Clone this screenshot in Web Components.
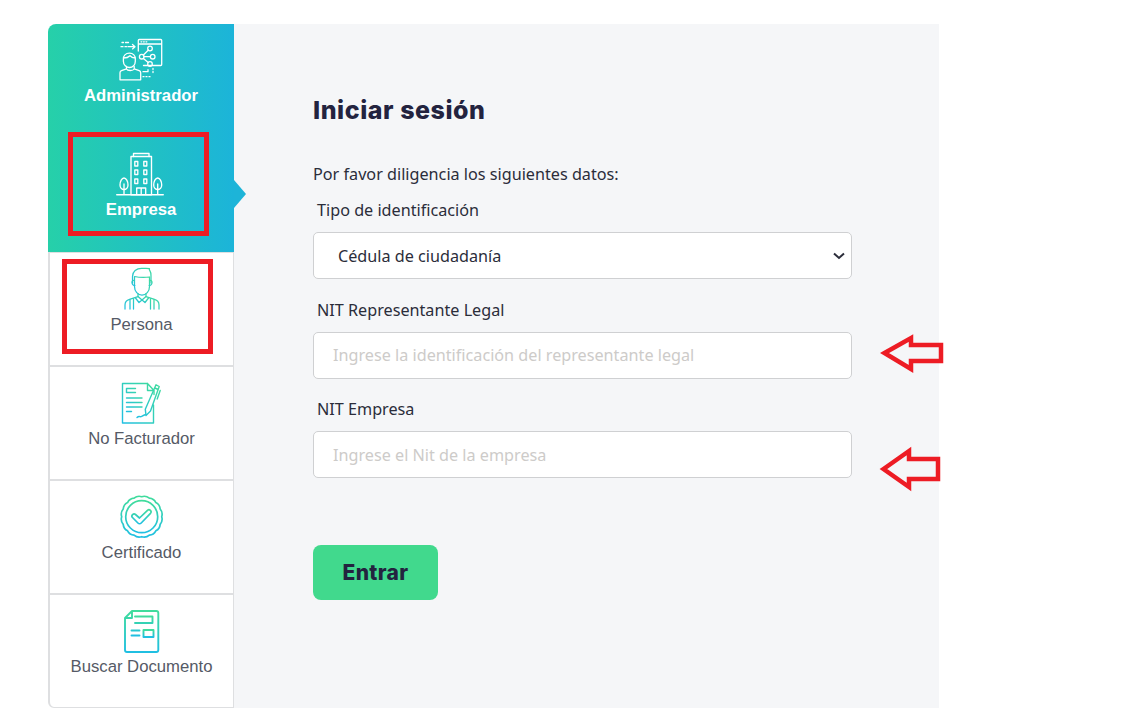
<!DOCTYPE html>
<html lang="es"><head><meta charset="utf-8"><title>Iniciar sesión</title>
<style>
html,body{margin:0;padding:0;background:#fff}
</style></head>
<body>
<login-page>
  <side-nav slot="nav">
    <nav-item label="Administrador" icon="admin" active></nav-item>
    <nav-item label="Empresa" icon="building" active pointer></nav-item>
    <nav-item label="Persona" icon="person"></nav-item>
    <nav-item label="No Facturador" icon="invoice"></nav-item>
    <nav-item label="Certificado" icon="cert"></nav-item>
    <nav-item label="Buscar Documento" icon="doc" last></nav-item>
  </side-nav>
  <login-form slot="main"></login-form>
</login-page>
<script>
const scallop=(cx,cy,r,n,a)=>{let d='';const st=2*Math.PI/n;for(let i=0;i<n;i++){const t=i*st,x=cx+r*Math.cos(t),y=cy+r*Math.sin(t),t2=t+st,x2=cx+r*Math.cos(t2),y2=cy+r*Math.sin(t2),m=t+st/2,qx=cx+(r+a)*Math.cos(m),qy=cy+(r+a)*Math.sin(m);d+=(i?'':`M${x.toFixed(2)} ${y.toFixed(2)}`)+`Q${qx.toFixed(2)} ${qy.toFixed(2)} ${x2.toFixed(2)} ${y2.toFixed(2)}`}return d+'Z'};
const ICONS={
admin:`<path d="M28.300 15V4.500c0-.6.400-1 1-1h21.400c.6 0 1 .4 1 1v24c0 .6-.4 1-1 1H33.500M28.300 8H51.700M31 5.800h.8M33.500 5.800h.8M36 5.800h.8"/><circle cx="31.700" cy="20.700" r="2.300"/><circle cx="40" cy="12.500" r="2.300"/><circle cx="42.700" cy="20.700" r="2.300"/><circle cx="40" cy="28" r="2.300"/><path d="M33.400 19l5-5M34 20.700h6.400M33.400 22.400l4.800 4"/><path d="M13.400 23.500c-.5-4 2.500-6.300 6-6.300s6.400 2.300 5.900 6.300M13.400 22c2.500 0 5-.6 6.600-2.300 1 1.400 3 2.300 5.300 2.300v3.500c0 3.300-2.600 6-5.800 6s-6.100-2.700-6.100-6z"/><path d="M16.500 30.500v2.300l-5 1.800c-1 .4-1.500 1.200-1.500 2.200v7h20.700v-7c0-1-.5-1.800-1.500-2.200l-5-1.800v-2.300M16.500 33c1 2 6.500 2 7.700 0"/><path d="M11 10.700h2M15 10.700h1.500M18 10.700h6.500M22.500 8.500l2.500 2.200-2.500 2.200M12 6.500h1.500M15.500 6.500h3"/><path d="M33 35.700h5v-2M43 32.500v1M43 35.500v1M33 40.700h1M36 40.700h1M39 40.700h1"/>`,
building:`<rect x="21" y="6.500" width="20.500" height="38.200"/><path d="M23.500 6.500V3.500h15.500v3M26.700 44.700V38h9v6.700M31.200 38v6.700M6.700 44.700H53.300M14 44.700V34M47.700 44.700V34"/><path d="M14 28c2.200 0 4 3.500 4 7 0 2.500-1.800 4.500-4 4.500S10 37.500 10 35c0-3.500 1.800-7 4-7zM47.700 28c2.200 0 4 3.500 4 7 0 2.500-1.800 4.500-4 4.500s-4-2-4-4.500c0-3.500 1.800-7 4-7z"/><rect x="24.800" y="11.500" width="3" height="4.500"/><rect x="33.800" y="11.500" width="3" height="4.500"/><rect x="24.800" y="20" width="3" height="4.500"/><rect x="33.800" y="20" width="3" height="4.500"/><rect x="24.800" y="29" width="3" height="4.500"/><rect x="33.800" y="29" width="3" height="4.500"/>`,
person:`<path d="M21.500 19v-6.500c0-5 4-8.200 9-8.200 3 0 5.500.2 8 .2-.6 1-.3 1.500.5 2.500 1 1.300 1 3 1 5V19"/><path d="M23.500 12.500c5 1 10.500 1 15 .5v9.500c0 5-3.400 8.500-7.500 8.500s-7.500-3.500-7.500-8.500z"/><path d="M23.500 16.500c-2-.4-2.500.8-2.500 2 0 1.500 1 3.200 2.800 3M38.500 16.500c2-.4 2.500.8 2.500 2 0 1.500-1 3.200-2.800 3"/><path d="M27 29.500v3.200l-8.500 2.600c-2.800.8-4.500 3-4.500 5.700v4M35 29.500v3.200l8.500 2.600c2.800.8 4.500 3 4.500 5.700v4"/><path d="M27 32.500l4 3.500-3 2.500-3.500-4.500M35 32.500l-4 3.500 3 2.500 3.500-4.500"/><path d="M19 35.500V45M22.500 34.700V45M39.500 34.700V45M43 35.500V45"/>`,
invoice:`<path d="M36.500 5.500H11.500V45h31V27M36.500 5.500v7h6.500v4M36.500 5.500l6.500 7"/><path d="M15.500 10.500h9M15.500 10.500v4h9M15.500 20h15.500M15.500 24.500h15.500M15.500 29h15.500M15.500 33.500h5"/><path d="M45 6.800l3.200 1.700-8.700 24.500-4.500 4.500-.7-6.200zM43.800 10l3.500 1.500M49.200 12.500l-3 8.500M26 39.500c2-2 3-.5 4-.8 1.500-.5 2-1.500 4-2"/>`,
cert:`<path d="M"/><circle cx="30.700" cy="24.700" r="16"/><path d="M21.500 25.500c-1.800-1.800 1-4.700 3-3l4 3.500 8-7.700c2-1.800 4.700 1 3 3l-9.300 9.700c-1 1-2.300 1-3.300 0z"/>`,
doc:`<path d="M21 5h24.300c1.100 0 2 .9 2 2v37c0 1.100-.9 2-2 2H16c-1.100 0-2-.9-2-2V12zM21 5v7h-7"/><path d="M24 10.500h17.500v6.500H24M20.500 24.500h8M20.500 29.500h8"/><rect x="32.500" y="24" width="10" height="7"/><path d="M20.500 37.500h17M41 37.500h1.500"/>`
};
const GRAD={person:[1,0,0,1],invoice:[1,0,0,1],cert:[0,0,0,1],doc:[0,0,0,1]};
const SW={admin:1.3,building:1.35,person:1.25,invoice:1.4,cert:1.7,doc:1.9};

customElements.define('nav-item',class extends HTMLElement{
  connectedCallback(){
    const r=this.attachShadow({mode:'open'});
    const ic=this.getAttribute('icon');
    const active=this.hasAttribute('active');
    const g=GRAD[ic]||[0,0,0,1];
    let body=ICONS[ic];
    if(ic==='cert') body=body.replace('<path d="M"/>',`<path d="${scallop(30.7,24.7,20,16,1.8)}"/>`);
    const stroke=active?'#fff':`url(#g-${ic})`;
    r.innerHTML=`<style>
      :host{display:flex;flex-direction:column;align-items:center;box-sizing:border-box;height:114px;position:relative;font:${active?'700':'400'} 16.700px/18px "Liberation Sans",Arial,sans-serif;color:${active?'#fff':'#555a66'};
        ${active?'':'background:#fff;border:solid #dedfe1;border-width:1px 1px 1px 2px;'}}
      :host([last]){border-bottom-left-radius:6px}
      svg.i{display:block;width:60px;height:50px;flex:none;margin-top:${active?12:11}px}
      span{display:block;margin-top:${active?1:2}px;white-space:nowrap}
      .tip{position:absolute;left:100%;top:42px;width:0;height:0;border-style:solid;border-width:14px 0 14px 12px;border-color:transparent transparent transparent #1db4d8}
    </style>
    <svg class="i" viewBox="1 0 60 50" fill="none" stroke="${stroke}" stroke-width="${SW[ic]}" stroke-linecap="round" stroke-linejoin="round" aria-hidden="true">
      <defs><linearGradient id="g-${ic}" gradientUnits="objectBoundingBox" x1="${g[0]}" y1="${g[1]}" x2="${g[2]}" y2="${g[3]}"><stop offset="0" stop-color="#40dc9c"/><stop offset="1" stop-color="#20bfe2"/></linearGradient></defs>
      ${body}
    </svg>
    <span>${this.getAttribute('label')}</span>
    ${this.hasAttribute('pointer')?'<i class="tip"></i>':''}`;
  }
});

customElements.define('side-nav',class extends HTMLElement{
  connectedCallback(){
    this.attachShadow({mode:'open'}).innerHTML=`<style>
      :host{display:block;width:186px;flex:none;position:relative;z-index:1}
      .grad{position:absolute;left:0;top:0;right:0;height:228px;background:linear-gradient(90deg,#26d0a9,#1cb4d9);border-top-left-radius:8px}
      .list{position:relative;display:flex;flex-direction:column}
    </style><div class="grad"></div><div class="list"><slot></slot></div>`;
  }
});

customElements.define('form-field',class extends HTMLElement{
  connectedCallback(){
    const r=this.attachShadow({mode:'open'});
    r.innerHTML=`<style>
      :host{display:block}
      label{display:block;padding-left:4px;font:inherit;line-height:24px;margin-bottom:10px;color:#2b2d3a}
      .ctl{position:relative;display:block}
      ::slotted(*){display:block}
    </style><label>${this.getAttribute('label')}</label><div class="ctl"><slot></slot></div>`;
  }
});

customElements.define('text-box',class extends HTMLElement{
  connectedCallback(){
    const r=this.attachShadow({mode:'open'});
    r.innerHTML=`<style>
      :host{display:block}
      input{display:block;box-sizing:border-box;width:100%;height:47px;padding:0 19px;border:1px solid #cfd0d2;border-radius:5px;background:#fff;font:inherit;color:#333;outline:none}
      input::placeholder{color:#cdcbc9;opacity:1}
    </style><input type="text" placeholder="${this.getAttribute('placeholder')}">`;
  }
});

customElements.define('select-box',class extends HTMLElement{
  connectedCallback(){
    const r=this.attachShadow({mode:'open'});
    r.innerHTML=`<style>
      :host{display:block;position:relative}
      select{display:block;box-sizing:border-box;width:100%;height:47px;padding:0 24px;border:1px solid #cfd0d2;border-radius:5px;background:#fff;font:inherit;color:#2b2d3a;appearance:none;-webkit-appearance:none;outline:none}
      svg{position:absolute;right:7px;top:20px;width:12px;height:8px;pointer-events:none}
    </style><select><option>${this.getAttribute('value')}</option></select>
    <svg viewBox="0 0 12 8" fill="none" stroke="#2b2d3a" stroke-width="2"><path d="M1 1.500l5 4.500 5-4.500"/></svg>`;
  }
});

customElements.define('login-form',class extends HTMLElement{
  connectedCallback(){
    const r=this.attachShadow({mode:'open'});
    r.innerHTML=`<style>
      :host{display:block;flex:1;background:#f5f6f8;height:684px;box-sizing:border-box;padding:70px 87px 0 79px;font:400 16.200px/24px "Noto Sans","Open Sans",sans-serif;color:#2b2d3a}
      h1{margin:0;font:800 25px/32px Inter,"Liberation Sans",sans-serif;letter-spacing:.55px;color:#23233f}
      p{margin:36px 0 0;line-height:24px}
      .fields{display:flex;flex-direction:column}
      form-field{margin-top:12px}
      form-field + form-field{margin-top:18.500px}
      button{display:block;margin-top:67px;width:125px;height:55px;border:0;border-radius:8px;background:#41d98d;font:800 21px/1 Inter,"Liberation Sans",sans-serif;letter-spacing:.4px;color:#23233f}
    </style>
    <h1>Iniciar sesión</h1>
    <p>Por favor diligencia los siguientes datos:</p>
    <div class="fields">
      <form-field label="Tipo de identificación"><select-box value="Cédula de ciudadanía"></select-box></form-field>
      <form-field label="NIT Representante Legal"><text-box placeholder="Ingrese la identificación del representante legal"></text-box></form-field>
      <form-field label="NIT Empresa"><text-box placeholder="Ingrese el Nit de la empresa"></text-box></form-field>
    </div>
    <button type="button">Entrar</button>`;
  }
});

customElements.define('red-box',class extends HTMLElement{
  connectedCallback(){
    this.attachShadow({mode:'open'}).innerHTML=`<style>:host{position:absolute;box-sizing:border-box;border:5px solid #ed1c24;z-index:3;pointer-events:none}</style>`;
  }
});
customElements.define('red-arrow',class extends HTMLElement{
  connectedCallback(){
    this.attachShadow({mode:'open'}).innerHTML=`<style>:host{position:absolute;left:0;top:0;width:1122px;height:724px;z-index:3;pointer-events:none}svg{display:block;width:100%;height:100%}</style>
    <svg viewBox="0 0 1122 724" fill="none" stroke="#ed1c24" stroke-width="4.500" stroke-linejoin="miter">
      <path d="M884.500 353L911 338V345H941V361H911V369Z"/>
      <path d="M883.500 469L909 451V459H938V479H909V487Z"/>
    </svg>`;
  }
});

customElements.define('login-page',class extends HTMLElement{
  connectedCallback(){
    this.attachShadow({mode:'open'}).innerHTML=`<style>
      :host{display:block;position:relative;width:1122px;height:724px;overflow:hidden}
      .wrap{display:flex;width:891px;margin-left:48px;padding-top:24px}
      red-box.a{left:68px;top:132px;width:141px;height:104px}
      red-box.b{left:62px;top:259px;width:151px;height:95px}
    </style>
    <div class="wrap"><slot name="nav"></slot><slot name="main"></slot></div>
    <red-box class="a"></red-box><red-box class="b"></red-box><red-arrow></red-arrow>`;
  }
});
</script>
</body></html>
